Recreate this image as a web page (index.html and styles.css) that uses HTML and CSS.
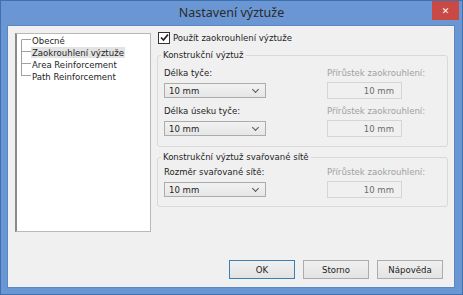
FILE: index.html
```html
<!DOCTYPE html>
<html lang="cs">
<head>
    <meta charset="UTF-8">
    <title>Nastavení výztuže</title>
    <link rel="stylesheet" href="styles.css">
</head>
<body>
    <div class="window">
        <div class="titlebar">
            <div></div>
            <div class="title">Nastavení výztuže</div>
            <div class="title-actions">
                <button class="close-btn">&#x2715;</button>
            </div>
        </div>
        <div class="client">
            <div class="tree">
                <div class="tree-item first">
                    <span class="connector"><span class="c-top"></span><span class="c-bottom"></span></span>
                    <span class="tree-label">Obecné</span>
                </div>
                <div class="tree-item">
                    <span class="connector"><span class="c-top"></span><span class="c-bottom"></span></span>
                    <span class="tree-label selected">Zaokrouhlení výztuže</span>
                </div>
                <div class="tree-item">
                    <span class="connector"><span class="c-top"></span><span class="c-bottom"></span></span>
                    <span class="tree-label">Area Reinforcement</span>
                </div>
                <div class="tree-item last">
                    <span class="connector"><span class="c-top"></span><span class="c-bottom"></span></span>
                    <span class="tree-label">Path Reinforcement</span>
                </div>
            </div>

            <div class="settings">
                <label class="check-row">
                    <span class="checkbox">
                        <svg width="9" height="9" viewBox="0 0 9 9"><path d="M1 4.5 L3.5 7 L8 1.5" fill="none" stroke="#222" stroke-width="1.7"/></svg>
                    </span>
                    Použít zaokrouhlení výztuže
                </label>

                <fieldset class="group">
                    <legend>Konstrukční výztuž</legend>
                    <div class="field-row">
                        <div class="field">
                            <div class="field-label">Délka tyče:</div>
                            <div class="combo"><span>10 mm</span><span class="chevron"></span></div>
                        </div>
                        <div class="field">
                            <div class="field-label disabled">Přírůstek zaokrouhlení:</div>
                            <div class="readonly">10 mm</div>
                        </div>
                    </div>
                    <div class="field-row">
                        <div class="field">
                            <div class="field-label">Délka úseku tyče:</div>
                            <div class="combo"><span>10 mm</span><span class="chevron"></span></div>
                        </div>
                        <div class="field">
                            <div class="field-label disabled">Přírůstek zaokrouhlení:</div>
                            <div class="readonly">10 mm</div>
                        </div>
                    </div>
                </fieldset>

                <fieldset class="group second">
                    <legend>Konstrukční výztuž svařované sítě</legend>
                    <div class="field-row">
                        <div class="field">
                            <div class="field-label">Rozměr svařované sítě:</div>
                            <div class="combo"><span>10 mm</span><span class="chevron"></span></div>
                        </div>
                        <div class="field">
                            <div class="field-label disabled">Přírůstek zaokrouhlení:</div>
                            <div class="readonly">10 mm</div>
                        </div>
                    </div>
                </fieldset>
            </div>

            <div class="buttons">
                <button class="btn default">OK</button>
                <button class="btn">Storno</button>
                <button class="btn">Nápověda</button>
            </div>
        </div>
    </div>
</body>
</html>
```

FILE: styles.css
```css
/* Base */
* {
    margin: 0;
    padding: 0;
    box-sizing: border-box;
}
body {
    font-family: "DejaVu Sans Condensed", "Liberation Sans", sans-serif;
    font-size: 9.5px;
    color: #1e1e1e;
    background: #6b98d4;
}
/* Window frame */
.window {
    width: 463px;
    height: 295px;
    display: flex;
    flex-direction: column;
    background: #6a97d3;
    border: 1px solid #3f70b0;
}
.titlebar {
    height: 24px;
    display: grid;
    grid-template-columns: 1fr auto 1fr;
    align-items: start;
}
.title {
    font-family: "Noto Sans", sans-serif;
    font-size: 12.5px;
    color: #2a2a2a;
    line-height: 24px;
}
.title-actions {
    display: flex;
    justify-content: flex-end;
    padding-right: 3px;
}
.close-btn {
    width: 27px;
    height: 19px;
    background: #c94a45;
    border: none;
    color: #fff;
    font-size: 9px;
    font-weight: bold;
    font-family: "DejaVu Sans", sans-serif;
}
/* Client area */
.client {
    flex: 1;
    margin: 0 7px 6px 6px;
    background: #f0f0f0;
    border: 1px solid #5887c4;
    display: grid;
    grid-template-columns: 136px 291px;
    grid-template-rows: 1fr auto;
    column-gap: 6px;
    padding: 5px 0 8px 7px;
}
/* Tree */
.tree {
    margin-top: 2px;
    height: 199px;
    background: #fff;
    border: 1px solid #b9b9b9;
    border-left: 2px solid #8a8a8a;
    padding: 0 0 0 4px;
}
.tree-item {
    display: flex;
    height: 12px;
    align-items: center;
}
.connector {
    width: 10px;
    height: 12px;
    display: flex;
    flex-direction: column;
}
.c-top {
    height: 6px;
    border-left: 1px solid #a0a0a0;
    border-bottom: 1px solid #a0a0a0;
}
.c-bottom {
    flex: 1;
    border-left: 1px solid #a0a0a0;
}
.tree-item.first .c-top,
.tree-item.last .c-bottom {
    border-left-color: transparent;
}
.tree-label {
    padding: 0 1px;
    line-height: 11px;
    white-space: nowrap;
}
.tree-label.selected {
    background: #e3e3e3;
}
/* Settings panel */
.settings {
    display: flex;
    flex-direction: column;
}
.check-row {
    display: flex;
    align-items: center;
    gap: 3px;
    height: 13px;
    padding-left: 1px;
    margin-bottom: 5px;
}
.checkbox {
    width: 12px;
    height: 12px;
    border: 1px solid #333;
    background: #fff;
    display: flex;
    align-items: center;
    justify-content: center;
}
.group {
    border: 1px solid #d9d9d9;
    border-radius: 3px;
    padding: 6px 6px 9px;
    min-width: 0;
}
.group legend {
    margin-left: -3px;
    padding: 0 2px;
    line-height: 12px;
}
.group.second {
    margin-top: 4px;
    padding-top: 3px;
    padding-bottom: 8px;
}
.field-row {
    display: flex;
    gap: 61px;
}
.field-row + .field-row {
    margin-top: 6px;
}
.field {
    display: flex;
    flex-direction: column;
    gap: 3px;
}
.field-label {
    line-height: 12px;
    white-space: nowrap;
}
.field-label.disabled {
    color: #a0a0a0;
}
.combo {
    width: 102px;
    height: 15px;
    margin-top: 1px;
    border: 1px solid #acacac;
    background: linear-gradient(#f2f2f2, #e6e6e6);
    display: flex;
    align-items: center;
    justify-content: space-between;
    padding: 0 7px 0 4px;
}
.chevron {
    width: 5px;
    height: 5px;
    border-right: 1px solid #555;
    border-bottom: 1px solid #555;
    transform: rotate(45deg);
    margin-top: -3px;
}
.readonly {
    width: 75px;
    height: 17px;
    border: 1px solid #d5d5d5;
    background: #f0f0f0;
    color: #6d6d6d;
    text-align: right;
    line-height: 15px;
    padding-right: 7px;
}
/* Buttons */
.buttons {
    grid-column: 1 / 3;
    display: flex;
    justify-content: flex-end;
    gap: 8px;
    padding-right: 5px;
}
.btn {
    width: 66px;
    height: 19px;
    font-family: inherit;
    font-size: 9.5px;
    color: #1e1e1e;
    border: 1px solid #acacac;
    background: linear-gradient(#f0f0f0, #e3e3e3);
}
.btn.default {
    border-color: #3c7fb1;
}
```
